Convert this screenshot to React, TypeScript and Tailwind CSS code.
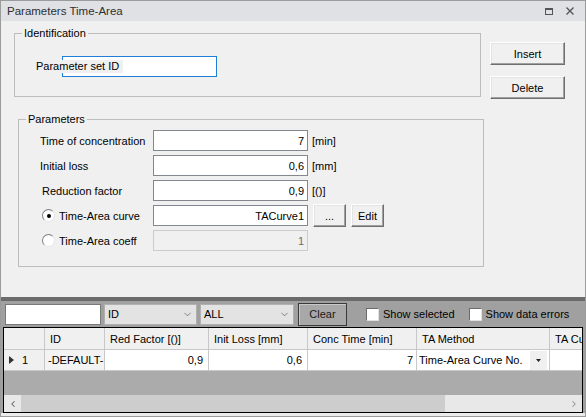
import { ChevronDown, ChevronLeft, ChevronRight } from 'lucide-react';

const font = { fontFamily: '"Liberation Sans", Arial, sans-serif' };

function Btn({ label, className }: { label: string; className: string }) {
  return (
    <button
      className={`flex items-center justify-center bg-[#f0f0f0] border border-t-[#ffffff] border-l-[#ffffff] border-r-[#6f6f6f] border-b-[#6f6f6f] shadow-[inset_-1px_-1px_0_#a0a0a0,inset_1px_1px_0_#e3e3e3] text-[11px] text-black ${className}`}
    >
      {label}
    </button>
  );
}

function Radio({ checked }: { checked?: boolean }) {
  return (
    <span className="relative w-[13px] h-[13px] rounded-full bg-white border border-t-[#7f7f7f] border-l-[#7f7f7f] border-r-[#e6e6e6] border-b-[#e6e6e6] flex items-center justify-center">
      {checked && <span className="w-[4px] h-[4px] rounded-full bg-black" />}
    </span>
  );
}

function NumField({ value, disabled }: { value: string; disabled?: boolean }) {
  return (
    <div
      className={`w-[155px] h-[21px] flex items-center justify-end pr-[3px] border ${
        disabled ? 'bg-[#f0f0f0] border-[#cccccc] text-[#6d6d6d]' : 'bg-white border-[#828790] text-black'
      }`}
    >
      {value}
    </div>
  );
}

function Checkbox({ label }: { label: string }) {
  return (
    <div className="flex items-center gap-[4px]">
      <span className="w-[13px] h-[13px] bg-white border border-t-[#6b6b6b] border-l-[#6b6b6b] border-r-[#e0e0e0] border-b-[#e0e0e0]" />
      <span className="text-black">{label}</span>
    </div>
  );
}

export default function App() {
  return (
    <div
      style={font}
      className="w-[586px] h-[417px] bg-[#f0f0f0] border border-[#9b9b9b] flex flex-col text-[11px] leading-[14px] text-black overflow-hidden"
    >
      {/* title bar */}
      <div className="h-[20px] shrink-0 bg-[#e0e1e5] flex items-center justify-between pl-[6px] pr-[11px]">
        <span className="text-[#2f2f2f] text-[11.5px]">Parameters Time-Area</span>
        <div className="flex items-center gap-[13px]">
          <svg width="8" height="7" viewBox="0 0 8 7">
            <rect x="0.5" y="0.5" width="7" height="6" fill="none" stroke="#555" />
            <line x1="0" y1="1.5" x2="8" y2="1.5" stroke="#555" />
          </svg>
          <svg width="8" height="8" viewBox="0 0 8 8">
            <path d="M0.5 0.5 L7.5 7.5 M7.5 0.5 L0.5 7.5" stroke="#555" strokeWidth="1.4" />
          </svg>
        </div>
      </div>

      {/* form area */}
      <div className="h-[276px] shrink-0 flex flex-col">
        <div className="flex mt-[5px]">
          <fieldset className="ml-[13px] w-[467px] h-[71px] border border-[#bdbdbd]">
            <legend className="ml-[7px] px-[2px]">Identification</legend>
            <div className="relative pt-[16px] pl-[47px]">
              <div className="w-[155px] h-[21px] bg-white border border-[#1e7fd6]" />
              <span className="absolute left-[18px] top-[20px] w-[90px] h-[13px] bg-[#f0f0f0] pl-[3px] leading-[13px]">
                Parameter set ID
              </span>
            </div>
          </fieldset>
          <div className="ml-[9px] flex flex-col pt-[16px] gap-[11px]">
            <Btn label="Insert" className="w-[75px] h-[23px]" />
            <Btn label="Delete" className="w-[75px] h-[23px]" />
          </div>
        </div>

        <fieldset className="ml-[17px] mt-[13px] w-[466px] h-[155px] border border-[#bdbdbd]">
          <legend className="ml-[7px] px-[2px]">Parameters</legend>
          <div className="pt-[4px] pl-[21px] flex flex-col gap-[4px]">
            <div className="flex items-center h-[21px]">
              <span className="w-[113px]">Time of concentration</span>
              <NumField value="7" />
              <span className="ml-[4px]">[min]</span>
            </div>
            <div className="flex items-center h-[21px]">
              <span className="w-[113px]">Initial loss</span>
              <NumField value="0,6" />
              <span className="ml-[4px]">[mm]</span>
            </div>
            <div className="flex items-center h-[21px]">
              <span className="w-[113px] pl-[2px]">Reduction factor</span>
              <NumField value="0,9" />
              <span className="ml-[4px]">[()]</span>
            </div>
            <div className="flex items-center h-[21px]">
              <div className="w-[113px] pl-[2px] flex items-center gap-[4px]">
                <Radio checked />
                <span>Time-Area curve</span>
              </div>
              <NumField value="TACurve1" />
              <Btn label="..." className="ml-[5px] w-[33px] h-[23px]" />
              <Btn label="Edit" className="ml-[5px] w-[33px] h-[23px]" />
            </div>
            <div className="flex items-center h-[21px]">
              <div className="w-[113px] pl-[2px] flex items-center gap-[4px]">
                <Radio />
                <span>Time-Area coeff</span>
              </div>
              <NumField value="1" disabled />
            </div>
          </div>
        </fieldset>
      </div>

      {/* grid panel */}
      <div className="flex-1 flex flex-col bg-[#a0a0a0] border-t-[4px] border-[#6b6b6b]">
        <div className="h-[26px] shrink-0 flex items-center pl-[4px]">
          <div className="w-[96px] h-[21px] bg-white border border-[#7a7a7a]" />
          <div className="ml-[3px] w-[93px] h-[21px] bg-[#e3e3e3] border border-[#b0b0b0] flex items-center justify-between pl-[3px] pr-[3px]">
            <span>ID</span>
            <ChevronDown size={11} strokeWidth={1.5} color="#555" />
          </div>
          <div className="ml-[3px] w-[94px] h-[21px] bg-[#e3e3e3] border border-[#b0b0b0] flex items-center justify-between pl-[3px] pr-[3px]">
            <span>ALL</span>
            <ChevronDown size={11} strokeWidth={1.5} color="#555" />
          </div>
          <button className="ml-[4px] w-[49px] h-[23px] bg-[#a8a8a8] border border-[#3a3a3a] shadow-[inset_1px_1px_0_#c8c8c8] text-[#1a1a1a] text-[11px]">
            Clear
          </button>
          <div className="ml-[19px]">
            <Checkbox label="Show selected" />
          </div>
          <div className="ml-[14px]">
            <Checkbox label="Show data errors" />
          </div>
        </div>

        <div className="mx-[2px] h-[86px] shrink-0 border border-black bg-[#ababab] flex flex-col">
          {/* header */}
          <div className="h-[22px] shrink-0 flex bg-[#f0f0f0] border-b border-[#c8c8c8]">
            <div className="w-[41px] border-r border-[#c8c8c8]" />
            <div className="w-[60px] border-r border-[#c8c8c8] pl-[5px] flex items-center">ID</div>
            <div className="w-[104px] border-r border-[#c8c8c8] pl-[5px] flex items-center">Red Factor [()]</div>
            <div className="w-[99px] border-r border-[#c8c8c8] pl-[5px] flex items-center">Init Loss [mm]</div>
            <div className="w-[109px] border-r border-[#c8c8c8] pl-[5px] flex items-center">Conc Time [min]</div>
            <div className="w-[133px] border-r border-[#c8c8c8] pl-[5px] flex items-center">TA Method</div>
            <div className="flex-1 pl-[5px] flex items-center overflow-hidden whitespace-nowrap">TA Cu</div>
          </div>
          {/* row */}
          <div className="h-[21px] shrink-0 flex border-b border-[#c8c8c8]">
            <div className="w-[41px] bg-[#f0f0f0] border-r border-[#c8c8c8] flex items-center pl-[5px] gap-[8px]">
              <svg width="5" height="8" viewBox="0 0 5 8">
                <path d="M0 0 L5 4 L0 8 Z" fill="#333" />
              </svg>
              <span>1</span>
            </div>
            <div className="w-[60px] bg-[#f3f3f3] border-r border-[#c8c8c8] pl-[3px] flex items-center">-DEFAULT-</div>
            <div className="w-[104px] bg-white border-r border-[#c8c8c8] pr-[5px] flex items-center justify-end">0,9</div>
            <div className="w-[99px] bg-white border-r border-[#c8c8c8] pr-[5px] flex items-center justify-end">0,6</div>
            <div className="w-[109px] bg-white border-r border-[#c8c8c8] pr-[3px] flex items-center justify-end">7</div>
            <div className="w-[133px] bg-white border-r border-[#c8c8c8] pl-[2px] flex items-center justify-between">
              <span>Time-Area Curve No.</span>
              <span className="w-[17px] h-[19px] mr-[2px] bg-[#f0f0f0] flex items-center justify-center">
                <svg width="5" height="3" viewBox="0 0 5 3">
                  <path d="M0 0 L5 0 L2.5 3 Z" fill="#222" />
                </svg>
              </span>
            </div>
            <div className="flex-1 bg-white" />
          </div>
          <div className="flex-1" />
          {/* horizontal scrollbar */}
          <div className="h-[17px] shrink-0 flex bg-[#e8e8e8]">
            <div className="w-[17px] flex items-center justify-center">
              <ChevronLeft size={10} strokeWidth={2.5} color="#606060" />
            </div>
            <div className="w-[424px] bg-[#cdcdcd]" />
            <div className="flex-1" />
            <div className="w-[17px] flex items-center justify-center">
              <ChevronRight size={10} strokeWidth={2.5} color="#909090" />
            </div>
          </div>
        </div>
        <div className="flex-1 bg-[#ececec]" />
      </div>
    </div>
  );
}
